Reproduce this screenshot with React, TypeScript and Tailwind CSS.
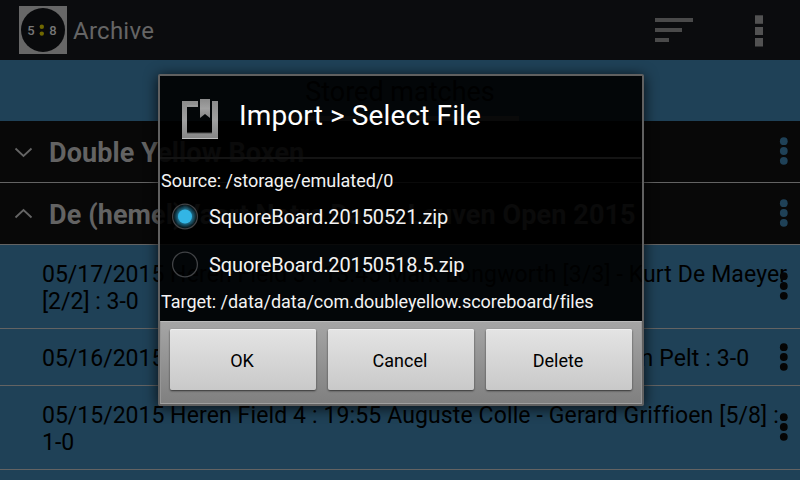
import React from "react";

function Dots({ color, className }: { color: string; className: string }) {
  return (
    <svg width="10" height="28" viewBox="0 0 10 28" className={className} fill={color}>
      <circle cx="4.8" cy="4.2" r="3.9" />
      <circle cx="4.8" cy="14" r="3.9" />
      <circle cx="4.8" cy="23.8" r="3.9" />
    </svg>
  );
}

function Header() {
  return (
    <header className="flex h-[60px] items-center bg-[#0b0c0e] pl-[19px]">
      <svg width="48" height="48" viewBox="0 0 48 48" className="shrink-0">
        <rect width="48" height="48" fill="#676767" />
        <circle cx="24" cy="24" r="22" fill="#090a0c" />
        <text x="8.2" y="28.7" fontSize="13" fontWeight="500" fill="#777777">5</text>
        <text x="30.2" y="28.7" fontSize="13" fontWeight="500" fill="#777777">8</text>
        <circle cx="22.8" cy="20.7" r="2.2" fill="#706800" />
        <circle cx="22.8" cy="27.6" r="2.2" fill="#706800" />
      </svg>
      <h1 className="mt-[2px] ml-[6px] text-[24px] leading-[28px] tracking-[0.25px] text-[#656565]">Archive</h1>
      <svg width="40" height="26" viewBox="0 0 40 26" className="ml-auto" fill="#4a4a4a">
        <rect x="1" y="1" width="38" height="4" />
        <rect x="1" y="11" width="27" height="4" />
        <rect x="1" y="21" width="14" height="4" />
      </svg>
      <svg width="10" height="34" viewBox="0 0 10 34" className="mr-[36px] ml-[60px]" fill="#525252">
        <rect x="1" y="2.3" width="8" height="8.5" />
        <rect x="1" y="14" width="8" height="8" />
        <rect x="1" y="25" width="8" height="8.5" />
      </svg>
    </header>
  );
}

function Group({ title, open }: { title: string; open: boolean }) {
  return (
    <div className="flex h-[62px] items-center border-b border-[#636363] bg-[#080808] pl-[14px]">
      <svg width="20" height="12" viewBox="0 0 20 12" fill="none" stroke="#656565" strokeWidth="1.8">
        <path d={open ? "M1.5 9.5 L9.5 2 L17.5 9.5" : "M1.5 2.5 L9.5 10 L17.5 2.5"} />
      </svg>
      <h2 className="mt-[2px] ml-[15px] text-[27px] leading-[32px] font-bold tracking-[0.1px] whitespace-nowrap text-[#636363]">
        {title}
      </h2>
      <Dots color="#1f4157" className="mr-[11px] mb-[2px] ml-auto" />
    </div>
  );
}

function Match({ date, text, score }: { date: string; text: string; score?: string }) {
  return (
    <div
      className={
        score
          ? "flex h-[84px] items-center border-b border-[#636363] pl-[42px]"
          : "flex h-[57px] items-center border-b border-[#636363] pl-[42px]"
      }
    >
      <div className="mt-[2px] w-[731px] text-[23px] leading-[27px] whitespace-nowrap text-black">
        <p>
          {date} <span className="tracking-[0.12px]">{text}</span>
        </p>
        {score && <p>{score}</p>}
      </div>
      <Dots color="#050505" className={score ? "mr-[11px] mb-[2px] ml-auto shrink-0" : "mr-[11px] ml-auto shrink-0"} />
    </div>
  );
}

function DialogIcon() {
  return (
    <svg width="38" height="42" viewBox="0 0 38 42" className="mt-[22px]">
      <defs>
        <linearGradient id="metal" x1="0" y1="0" x2="0" y2="1">
          <stop offset="0" stopColor="#8c8c8c" />
          <stop offset="0.5" stopColor="#a0a0a0" />
          <stop offset="1" stopColor="#858585" />
        </linearGradient>
      </defs>
      <path d="M1 3H17V8H6V35H31V3H37V41H1Z" fill="url(#metal)" />
      <path d="M1 40.5H37M6 8.3H17" stroke="#bdbdbd" />
      <path d="M6 35H31" stroke="#555555" />
      <path d="M19 1H29V20L24 16L19 20Z" fill="url(#metal)" />
    </svg>
  );
}

function Radio({ on }: { on: boolean }) {
  return (
    <svg width="32" height="32" viewBox="0 0 32 32">
      <defs>
        <radialGradient id="glow">
          <stop offset="0.5" stopColor="#33b5e5" stopOpacity="0.7" />
          <stop offset="1" stopColor="#33b5e5" stopOpacity="0.05" />
        </radialGradient>
      </defs>
      {on && <circle cx="16" cy="15.5" r="12" fill="url(#glow)" />}
      <circle cx="16" cy="15.5" r="12.4" fill="none" stroke="#414346" strokeWidth="1.3" />
      {on && <circle cx="16" cy="15.5" r="7" fill="#33b5e5" />}
    </svg>
  );
}

function DialogButton({ label }: { label: string }) {
  return (
    <button className="h-[61px] w-[146px] rounded-[2px] bg-linear-to-b from-[#e4e4e4] to-[#c9c9c9] pt-[2px] pr-[2px] text-[18px] text-black shadow-[0_1px_2px_#333333,inset_0_1px_0_#f0f0f0]">
      {label}
    </button>
  );
}

function ImportDialog() {
  return (
    <div className="absolute top-[74px] left-[158px] flex h-[332px] w-[486px] flex-col rounded-[2px] border-2 border-[#606060] bg-black/90 bg-clip-padding text-white shadow-[0_2px_14px_rgba(0,0,0,0.8)]">
      <div className="flex h-[81px] items-start pl-[21px]">
        <DialogIcon />
        <h2 className="mt-[24px] ml-[20px] text-[28px] leading-[32px] tracking-[0.12px] whitespace-nowrap">
          Import &gt; Select File
        </h2>
      </div>
      <div className="mr-px h-[2px] bg-[#141414]" />
      <div className="flex h-[162px] flex-col pl-px text-[18px] leading-[21px] whitespace-nowrap text-[#f3f3f3]">
        <p className="mt-[11px]">Source: /storage/emulated/0</p>
        <div className="mt-[2px] flex h-[48px] items-center pl-[8px] text-[20px] tracking-[-0.12px]">
          <Radio on />
          <span className="ml-[8px]">SquoreBoard.20150521.zip</span>
        </div>
        <div className="flex h-[48px] items-center pl-[8px] text-[20px] tracking-[-0.12px]">
          <Radio on={false} />
          <span className="ml-[8px]">SquoreBoard.20150518.5.zip</span>
        </div>
        <p className="mt-[2px] tracking-[-0.03px]">Target: /data/data/com.doubleyellow.scoreboard/files</p>
      </div>
      <div className="flex flex-1 gap-[12px] border border-t-[#bababa] border-r-[#969696] border-b-[#a0a0a0] border-l-[#969696] bg-linear-to-b from-[#a5a5a5] to-[#808080] pt-[7px] pl-[9px]">
        <DialogButton label="OK" />
        <DialogButton label="Cancel" />
        <DialogButton label="Delete" />
      </div>
    </div>
  );
}

export default function App() {
  return (
    <div className="relative h-[480px] w-[800px] overflow-hidden bg-[#1f4157] font-[Roboto,sans-serif]">
      <Header />
      <div className="flex h-[61px] flex-col items-center pt-[16px]">
        <span className="text-[27px] leading-[32px] text-black">Stored matches</span>
        <div className="mt-[8px] h-[5px] w-[237px] bg-[#636363]" />
      </div>
      <Group title="Double Yellow Boxen" open={false} />
      <Group title="De (hemel)Vaart Notre Dame Leuven Open 2015" open />
      <Match date="05/17/2015" text="Heren Field 3 : 13:45 Mark Longworth [3/3] - Kurt De Maeyer" score="[2/2] : 3-0" />
      <Match date="05/16/2015" text="Heren Field 3 : 18:30 Auguste Colle - Robin Van Pelt : 3-0" />
      <Match date="05/15/2015" text="Heren Field 4 : 19:55 Auguste Colle - Gerard Griffioen [5/8] :" score="1-0" />
      <ImportDialog />
    </div>
  );
}
